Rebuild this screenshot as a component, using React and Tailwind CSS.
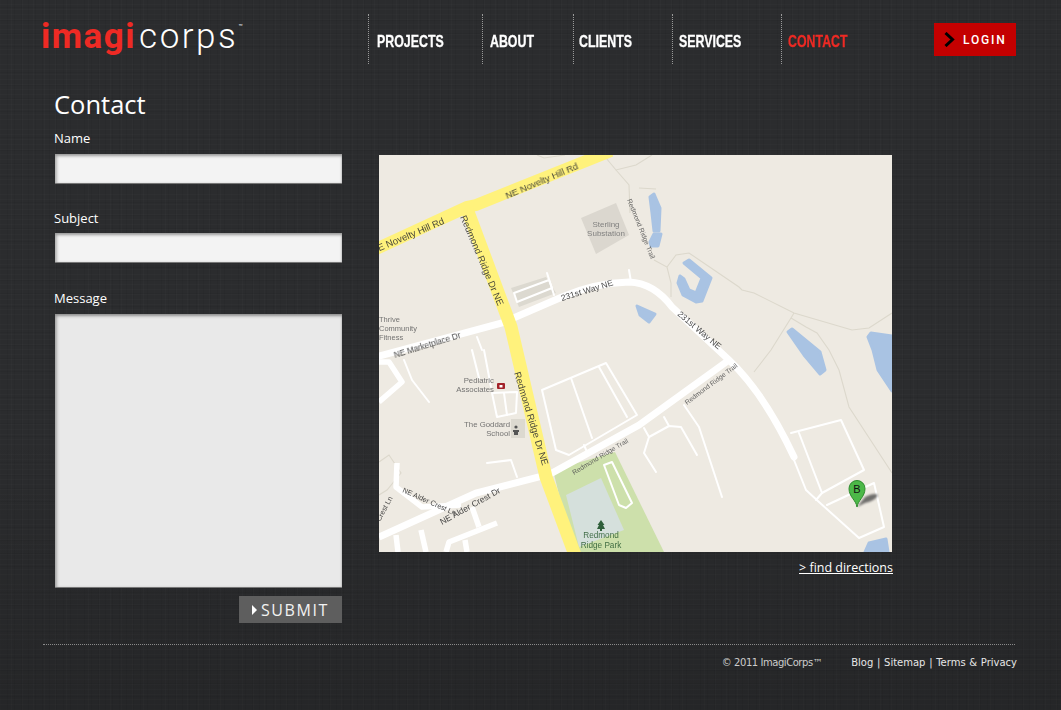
// App.jsx — ImagiCorps contact page
import React from 'react';

const navItems = [
  { label: 'PROJECTS', width: 'w-[114px]', pad: 'pl-2' },
  { label: 'ABOUT', width: 'w-[91px]', pad: 'pl-[7px]' },
  { label: 'CLIENTS', width: 'w-[99px]', pad: 'pl-[5px]' },
  { label: 'SERVICES', width: 'w-[109px]', pad: 'pl-[6px]' },
  { label: 'CONTACT', width: 'w-[153px]', pad: 'pl-[6px]', active: true },
];

const water = [
  '271,42 275,39 281,53 280,76 275,76 273,58',
  '275,79 282,79 279,91 272,91 271,87',
  '305,108 310,105 332,123 323,146 317,147 304,140 299,128 301,121 305,124 310,135 317,138 323,123',
  '258,151 276,159 270,167 261,160',
  '409,177 413,174 441,197 446,215 441,219 425,200',
  '489,182 492,178 513,181 513,236 499,215 494,195',
  '486,397 490,388 507,384 509,397',
];

const trails = [
  '158,0 165,3 186,0',
  '227,3 237,15 257,10 273,0',
  '237,15 250,30 251,58',
  '260,33 277,34',
  '275,105 288,112 292,128 292,142',
  '288,112 297,100 310,98 360,132 363,135 375,138 415,158 473,175 490,173 513,158',
  '415,158 412,163 392,195 375,217',
  '412,163 427,172 438,178 450,195 460,215 470,252 513,318',
  '0,307 10,300 22,318 8,335 0,340',
];

const thinStreets = [
  '412,278 462,265 485,315 443,338 420,278',
  '415,305 427,335 440,347 480,383 505,372 495,328 448,350',
  '437,345 443,338',
  '265,273 270,282 265,298 277,317',
  '270,282 290,271 302,272 318,300',
  '285,262 290,271',
  '305,250 320,272 343,342',
  '163,235 227,208 258,260 190,300 177,295 163,235',
  '192,223 213,283',
  '220,212 248,262',
  '205,290 208,297',
  '113,238 138,237 137,258 118,262 113,238',
  '125,238 128,260',
  '93,195 100,223',
  '105,195 112,232',
  '98,182 103,195',
  '25,205 33,225 50,247',
  '108,308 132,305 138,322',
  '225,310 233,307 253,348 247,353 240,350 225,310',
  '135,138 170,125 173,133 138,147 135,138',
  '168,118 175,140',
  '250,115 252,127',
];

const wideStreets = [
  '0,207 10,207 23,227 0,247',
  '18,308 17,332 43,352 82,350',
  '93,352 100,372',
  '67,397 70,387 118,368',
  '17,380 19,397',
  '42,375 47,397',
  '86,385 88,397',
];

function MapLabel({ x, y, r = 0, size = 8, fill = '#333', anchor = 'start', children }) {
  return (
    <text
      x={x}
      y={y}
      fontSize={size}
      fill={fill}
      textAnchor={anchor}
      transform={r ? `rotate(${r} ${x} ${y})` : undefined}
      fontFamily="'Liberation Sans', Arial, sans-serif"
    >
      {children}
    </text>
  );
}

function StreetMap() {
  return (
    <svg viewBox="0 0 513 397" className="block w-[513px] h-[397px] bg-[#eeeae2]">
      <polygon points="202,63 237,48 250,80 217,99" fill="#dbd7cf" />
      <polygon points="132,133 167,122 177,138 140,152" fill="#dcd9d0" />
      <polygon points="174,315 236,297 285,397 201,397 185,360" fill="#cde0ab" />
      <polygon points="187,340 222,323 245,375 200,392" fill="#d5e0dc" />
      <polygon points="132,264 146,264 146,283 132,283" fill="#dcd9d0" />
      {trails.map((p) => (
        <polyline key={p} points={p} fill="none" stroke="#dcd8cc" strokeWidth="1.1" />
      ))}
      {water.map((p) => (
        <polygon key={p} points={p} fill="#a9c3e3" stroke="#a9c3e3" strokeWidth="3" strokeLinejoin="round" />
      ))}
      {thinStreets.map((p) => (
        <polyline key={p} points={p} fill="none" stroke="#fff" strokeWidth="2" strokeLinejoin="round" strokeLinecap="round" />
      ))}
      {wideStreets.map((p) => (
        <polyline key={p} points={p} fill="none" stroke="#fff" strokeWidth="5.5" strokeLinejoin="round" />
      ))}
      <path d="M0 201 L123 168 L183 142 Q215 128 250 127 Q275 128 293 152 L350 205 Q385 238 415 302" fill="none" stroke="#fff" strokeWidth="7" strokeLinecap="round" />
      <path d="M350 205 L260 270 L173 318 L160 322 L97 338 L0 382" fill="none" stroke="#fff" strokeWidth="7" />
      <path d="M-5 95 L88 52 L97 50 L232 -4" fill="none" stroke="#fff27c" strokeWidth="12" />
      <path d="M88 54 L132 172 L167 322 L196 400" fill="none" stroke="#fff27c" strokeWidth="13" />

      <g className="opacity-90">
        <MapLabel x={128} y={44} r={-23} size={9.5}>NE Novelty Hill Rd</MapLabel>
        <MapLabel x={-6} y={99} r={-23} size={9.5}>NE Novelty Hill Rd</MapLabel>
        <MapLabel x={81} y={62} r={67} size={9.5}>Redmond Ridge Dr NE</MapLabel>
        <MapLabel x={135} y={218} r={73} size={9.5}>Redmond Ridge Dr NE</MapLabel>
        <MapLabel x={183} y={146} r={-17} size={8.5}>231st Way NE</MapLabel>
        <MapLabel x={298} y={160} r={40} size={8.5}>231st Way NE</MapLabel>
        <MapLabel x={16} y={203} r={-17} size={8.2}>NE Marketplace Dr</MapLabel>
        <MapLabel x={195} y={320} r={-31} size={6.8} fill="#555">Redmond Ridge Trail</MapLabel>
        <MapLabel x={308} y={250} r={-37} size={6.8} fill="#555">Redmond Ridge Trail</MapLabel>
        <MapLabel x={248} y={45} r={68} size={6.8} fill="#555">Redmond Ridge Trail</MapLabel>
        <MapLabel x={63} y={370} r={-29} size={8.5}>NE Alder Crest Dr</MapLabel>
        <MapLabel x={23} y={337} r={24} size={7.2}>NE Alder Crest Ln</MapLabel>
        <MapLabel x={1} y={367} r={-62} size={7.2}>Crest Ln</MapLabel>
        <MapLabel x={0} y={167} size={7.5} fill="#666">Thrive</MapLabel>
        <MapLabel x={0} y={176} size={7.5} fill="#666">Community</MapLabel>
        <MapLabel x={0} y={185} size={7.5} fill="#666">Fitness</MapLabel>
        <MapLabel x={115} y={228} size={7.8} fill="#666" anchor="end">Pediatric</MapLabel>
        <MapLabel x={115} y={237} size={7.8} fill="#666" anchor="end">Associates</MapLabel>
        <MapLabel x={131} y={272} size={7.8} fill="#666" anchor="end">The Goddard</MapLabel>
        <MapLabel x={131} y={281} size={7.8} fill="#666" anchor="end">School</MapLabel>
        <MapLabel x={227} y={72} size={8} fill="#777" anchor="middle">Sterling</MapLabel>
        <MapLabel x={227} y={81} size={8} fill="#777" anchor="middle">Substation</MapLabel>
        <MapLabel x={222} y={383} size={8.2} fill="#2f5f35" anchor="middle">Redmond</MapLabel>
        <MapLabel x={222} y={393} size={8.2} fill="#2f5f35" anchor="middle">Ridge Park</MapLabel>
      </g>

      {/* pediatric marker */}
      <rect x="118" y="228" width="8" height="6" rx="1" fill="#a3232b" />
      <rect x="120.5" y="230" width="3" height="2.5" fill="#fff" />
      {/* school marker */}
      <circle cx="137" cy="272" r="1.6" fill="#555" />
      <path d="M134 275 h6 v2 h-1 v3 h-4 v-3 h-1z" fill="#555" />
      {/* park tree */}
      <path d="M222 365 L225.5 370 L224 370 L226 374 L223 374 L223 376 L221 376 L221 374 L218 374 L220 370 L218.5 370 Z" fill="#2f5f3a" />

      {/* B pin */}
      <path d="M478 352 L486 342 Q495 337 499 340 Q496 346 486 348 Z" fill="#444" opacity="0.75" className="blur-[1px]" />
      <path d="M478 352 C477 345 470 342 470 333.5 A8 8 0 0 1 486 333.5 C486 342 479 345 478 352 Z" fill="#4cb848" stroke="#2c8a2c" strokeWidth="1" />
      <MapLabel x={478} y={337.5} size={11} fill="#111" anchor="middle">B</MapLabel>
    </svg>
  );
}

function Field({ label, className = '' }) {
  return (
    <div className={className}>
      <label className="block h-5 leading-5 text-[13px] text-white">{label}</label>
      <input
        type="text"
        className="block ml-px w-[287px] h-[30px] mt-[6px] bg-[#f3f3f3] border-b border-[#777] shadow-[inset_0_3px_3px_-1px_#9a9a9a,inset_3px_0_3px_-1px_#b5b5b5,inset_-2px_0_2px_-1px_#d0d0d0]"
      />
    </div>
  );
}

export default function App() {
  return (
    <div
      className="h-[710px] overflow-hidden text-white font-['Open_Sans',sans-serif] bg-[#2b2c2e] bg-[image:linear-gradient(180deg,transparent_60%,rgba(0,0,0,0.14)_100%),repeating-linear-gradient(0deg,rgba(255,255,255,0.014)_0px,rgba(255,255,255,0.014)_1px,transparent_1px,transparent_5px),repeating-linear-gradient(0deg,rgba(0,0,0,0.05)_0px,rgba(0,0,0,0.05)_1px,transparent_1px,transparent_13px),repeating-linear-gradient(90deg,rgba(0,0,0,0.05)_0px,rgba(0,0,0,0.05)_1px,transparent_1px,transparent_7px),repeating-linear-gradient(90deg,rgba(255,255,255,0.014)_0px,rgba(255,255,255,0.014)_1px,transparent_1px,transparent_11px)]"
    >
      {/* Header */}
      <header className="flex h-[82px] pl-[42px]">
        <a className="block w-[326px] -ml-px pt-[12px] text-[35px] leading-[50px] font-['Roboto',sans-serif] whitespace-nowrap">
          <span className="font-bold text-[#ee2a24] tracking-[1.5px]">imagi</span>
          <span className="font-light tracking-[2.5px] ml-[3px]">corps</span>
          <sup className="text-[7px] align-[16px]">™</sup>
        </a>
        <nav className="flex h-[50px] mt-[14px] ml-px">
          {navItems.map((item) => (
            <a
              key={item.label}
              className={`${item.width} ${item.pad} border-l border-dotted border-[#999] pt-[17px] text-[16.5px] leading-5 font-bold font-['Liberation_Sans',sans-serif] [-webkit-text-stroke:0.3px] ${item.active ? 'text-[#ee2a24]' : 'text-white'}`}
            >
              <span className="inline-block origin-left scale-x-[0.75]">{item.label}</span>
            </a>
          ))}
        </nav>
        <a className="flex items-center w-[82px] h-[33px] mt-[23px] pl-[10px] bg-[#c40000]">
          <svg width="11" height="15" viewBox="0 0 11 15" className="shrink-0">
            <path d="M1.5 1 L8.5 7.5 L1.5 14" fill="none" stroke="#000" strokeWidth="3" />
          </svg>
          <span className="ml-2 text-[12px] font-medium tracking-[1.8px] font-['Roboto',sans-serif]">LOGIN</span>
        </a>
      </header>

      {/* Main */}
      <main className="flex pl-[54px] gap-[37px]">
        <form className="w-[288px]">
          <h1 className="h-[46px] leading-[44px] text-[25.5px] font-normal">Contact</h1>
          <Field label="Name" />
          <Field label="Subject" className="mt-6 [&>input]:mt-[5px]" />
          <div className="mt-[25px]">
            <label className="block h-5 leading-5 text-[13px]">Message</label>
            <textarea className="block ml-px mt-[6px] w-[287px] h-[274px] resize-none bg-[#e9e9e9] border-b border-[#777] shadow-[inset_0_3px_3px_-1px_#8f8f8f,inset_3px_0_3px_-1px_#aaa,inset_-2px_0_2px_-1px_#d0d0d0]" />
          </div>
          <div className="flex justify-end mt-2">
            <button type="button" className="flex items-center justify-center gap-[4px] w-[103px] h-[27px] bg-[#5e5e5e] text-[16px] tracking-[1.6px] text-[#f2f2f2]">
              <span className="w-0 h-0 border-y-[5px] border-y-transparent border-l-[5px] border-l-white" />
              SUBMIT
            </button>
          </div>
        </form>

        <section className="w-[514px] pt-[73px]">
          <StreetMap />
          <div className="mt-[7px] text-right text-[12.5px] leading-[17px]">
            <a className="underline">&gt; find directions</a>
          </div>
        </section>
      </main>

      {/* Footer */}
      <footer className="mt-[21px] ml-[43px] w-[972px] border-t border-dotted border-[#8a8a8a] font-['DejaVu_Sans',sans-serif] text-[10px] leading-[14px] text-[#e6e6e6]">
        <div className="flex justify-end mt-[11px] -mr-[2px]">
          <span className="mr-[29px] text-[#ccc] tracking-[-0.45px]">© 2011 ImagiCorps™</span>
          <span className="[word-spacing:0.5px]">Blog | Sitemap | Terms &amp; Privacy</span>
        </div>
      </footer>
    </div>
  );
}
